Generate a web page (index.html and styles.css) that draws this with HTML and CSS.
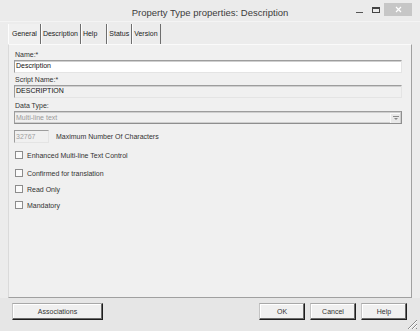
FILE: index.html
```html
<!DOCTYPE html>
<html lang="en">
<head>
    <meta charset="UTF-8">
    <meta name="viewport" content="width=device-width, initial-scale=1.0">
    <title>Property Type properties: Description</title>
    <link rel="stylesheet" href="styles.css">
</head>
<body>

<div class="window">
    <div class="titlebar">
        <div></div>
        <div class="title">Property Type properties: Description</div>
        <div class="controls">
            <svg class="ctl-min" width="7" height="13"><rect x="0" y="9" width="7" height="1" fill="#555"/></svg>
            <svg class="ctl-max" width="8" height="13"><rect x="0.5" y="4.5" width="7" height="5" fill="none" stroke="#444"/><rect x="0" y="4" width="8" height="2" fill="#444"/></svg>
            <div class="ctl-close">
                <svg width="7" height="7"><path d="M1 1 L6 6 M6 1 L1 6" stroke="#fff" stroke-width="1.2"/></svg>
            </div>
        </div>
    </div>

    <div class="client">
        <div class="tabs">
            <div class="tab tab-active">General</div>
            <div class="tab">Description</div>
            <div class="tab tab-wide">Help</div>
            <div class="tab">Status</div>
            <div class="tab">Version</div>
        </div>

        <div class="panel">
            <div class="field">
                <div class="label">Name:*</div>
                <div class="textbox">Description</div>
            </div>
            <div class="field field-gap">
                <div class="label">Script Name:*</div>
                <div class="textbox textbox-disabled">DESCRIPTION</div>
            </div>
            <div class="field field-gap-lg">
                <div class="label">Data Type:</div>
                <div class="select">
                    <span class="select-text">Multi-line text</span>
                    <span class="select-btn">
                        <svg width="6" height="5"><rect x="0" y="0" width="6" height="1" fill="#8a8a8a"/><path d="M1 2 L5 2 L3 4 Z" fill="#8a8a8a"/></svg>
                    </span>
                </div>
            </div>

            <div class="max-row">
                <div class="numbox">32767</div>
                <span>Maximum Number Of Characters</span>
            </div>

            <div class="checks">
                <div class="check check-sep"><span class="box"></span>Enhanced Multi-line Text Control</div>
                <div class="check"><span class="box"></span>Confirmed for translation</div>
                <div class="check"><span class="box"></span>Read Only</div>
                <div class="check"><span class="box"></span>Mandatory</div>
            </div>
        </div>

        <div class="footer">
            <button class="button button-assoc">Associations</button>
            <div class="footer-right">
                <button class="button">OK</button>
                <button class="button">Cancel</button>
                <button class="button">Help</button>
            </div>
        </div>
    </div>

    <svg class="grip" width="13" height="13">
        <path d="M12 3 L3 12 M12 7 L7 12 M12 11 L11 12" stroke="#8a8a8a" stroke-width="1"/>
        <path d="M12 4 L4 12 M12 8 L8 12" stroke="#fff" stroke-width="1"/>
    </svg>
</div>

</body>
</html>
```

FILE: styles.css
```css
body {
    margin: 0;
    font-family: "Liberation Sans", Arial, sans-serif;
    font-size: 7px;
    color: #222;
    background: #e6e6e6;
}

.window {
    position: relative;
    width: 420px;
    height: 331px;
    display: flex;
    flex-direction: column;
    background: #e8e8e8;
    box-sizing: border-box;
}

/* title bar */
.titlebar {
    height: 22px;
    flex: none;
    display: grid;
    grid-template-columns: 1fr auto 1fr;
    background: #ebebeb;
    border-bottom: 1px solid #f4f4f4;
    box-sizing: border-box;
}

.title {
    font-size: 9.5px;
    color: #3c3c3c;
    padding-top: 8px;
    line-height: 10px;
}

.controls {
    justify-self: end;
    display: flex;
    align-items: flex-start;
    margin-top: 3px;
    padding-right: 8px;
}

.ctl-min {
    margin-right: 9px;
}

.ctl-max {
    margin-right: 4px;
}

.ctl-close {
    width: 28px;
    height: 13px;
    background: #c6c6c6;
    display: flex;
    align-items: center;
    justify-content: center;
}

/* client area */
.client {
    flex: 1;
    display: flex;
    flex-direction: column;
    padding: 0 8px;
    background: #ececec;
}

.tabs {
    display: flex;
    height: 20px;
    margin-top: 2px;
    flex: none;
}

.tab {
    line-height: 20px;
    padding: 0 2px 0 1px;
    border-left: 1px solid #fdfdfd;
    border-right: 1px solid #6e6e6e;
    color: #222;
}

.tab-active {
    padding-left: 3px;
    padding-right: 3px;
    background: #f0f0f0;
}

.tab-wide {
    padding-right: 9px;
}

.panel {
    flex: 1;
    background: #f0f0f0;
    border-top: 1px solid #fafafa;
    border-left: 1px solid #dadada;
    border-right: 1px solid #a0a0a0;
    border-bottom: 1px solid #a0a0a0;
    padding: 5px 9px 0 5px;
}

.label {
    line-height: 10px;
    height: 10px;
    padding-left: 1px;
    color: #333;
}

.field-gap {
    margin-top: 2px;
}

.field-gap-lg {
    margin-top: 3px;
}

.textbox {
    height: 13px;
    box-sizing: border-box;
    line-height: 10px;
    padding-left: 1px;
    background: #fff;
    border: 1px solid;
    border-color: #9d9d9d #e4e4e4 #e4e4e4 #9d9d9d;
    box-shadow: inset 0 1px 0 #cfcfcf;
    color: #111;
}

.textbox-disabled {
    background: #f0f0f0;
}

.select {
    height: 13px;
    box-sizing: border-box;
    display: flex;
    align-items: center;
    border: 1px solid;
    border-color: #9d9d9d #8e8e8e #8e8e8e #9d9d9d;
    box-shadow: inset 0 1px 0 #cfcfcf, inset -1px -1px 0 #cfcfcf;
    background: #f0f0f0;
}

.select-text {
    flex: 1;
    padding-left: 1px;
    color: #9a9a9a;
}

.select-btn {
    width: 10px;
    height: 10px;
    margin-right: 1px;
    display: flex;
    align-items: center;
    justify-content: center;
    background: #e9e9e9;
    border-left: 1px solid #fafafa;
    border-top: 1px solid #fafafa;
    box-sizing: border-box;
}

.max-row {
    display: flex;
    align-items: center;
    gap: 7px;
    margin-top: 6px;
    color: #333;
}

.numbox {
    width: 35px;
    height: 13px;
    box-sizing: border-box;
    line-height: 11px;
    padding-left: 1px;
    color: #a0a0a0;
    border: 1px solid;
    border-color: #9d9d9d #e4e4e4 #e4e4e4 #9d9d9d;
}

.checks {
    display: flex;
    flex-direction: column;
    gap: 6px;
    margin-top: 7px;
}

.check {
    display: flex;
    align-items: center;
    height: 10px;
    gap: 4px;
    padding-left: 1px;
    color: #333;
}

.check-sep {
    margin-bottom: 2px;
}

.box {
    width: 8px;
    height: 8px;
    box-sizing: border-box;
    border: 1px solid #8c8c8c;
    background: #fbfbfb;
}

/* bottom buttons */
.footer {
    height: 33px;
    flex: none;
    display: flex;
    justify-content: space-between;
    align-items: flex-start;
    padding: 5px 5px 0 4px;
    box-sizing: border-box;
    background: #e6e6e6;
    margin: 0 -8px;
    padding-left: 12px;
    padding-right: 13px;
}

.footer-right {
    display: flex;
    gap: 5px;
}

.button {
    width: 46px;
    height: 17px;
    padding: 0;
    font-family: "Liberation Sans", Arial, sans-serif;
    font-size: 7px;
    color: #333;
    background: #f0f0f0;
    border: 1px solid;
    border-color: #a8a8a8 #1e1e1e #1e1e1e #c4c4c4;
    box-shadow: inset -1px -1px 0 #6a6a6a, inset 1px 1px 0 #fff;
}

.button-assoc {
    width: 91px;
}

.grip {
    position: absolute;
    right: 2px;
    bottom: 1px;
}
```
